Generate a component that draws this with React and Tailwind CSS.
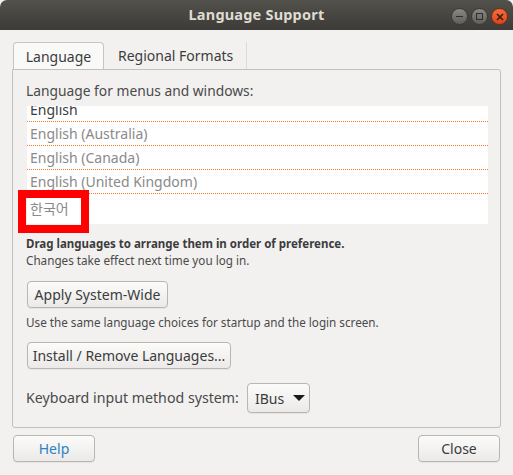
import React from "react";

const font = { fontFamily: '"Noto Sans", "Noto Sans CJK KR", sans-serif' };

function Btn({ children, className = "", textClass = "text-[#3c3c3c]" }) {
  return (
    <div
      className={`flex items-center justify-center rounded-[4px] border border-[#b9b6b0] bg-gradient-to-b from-[#fbfbfa] to-[#ebeae8] shadow-[0_1px_0_rgba(0,0,0,0.05)] ${textClass} ${className}`}
    >
      {children}
    </div>
  );
}

function Dots() {
  return (
    <svg className="block" width="461" height="1" viewBox="0 0 461 1">
      <line x1="0" y1="0.5" x2="461" y2="0.5" stroke="#f47421" strokeWidth="1" strokeDasharray="1 1" shapeRendering="crispEdges" />
    </svg>
  );
}

export default function App() {
  const rows = [
    { t: "English", c: "text-[#3c3c3c]" },
    { t: "English (Australia)", c: "text-[#8a8a8a]" },
    { t: "English (Canada)", c: "text-[#8a8a8a]" },
    { t: "English (United Kingdom)", c: "text-[#8a8a8a]" },
  ];
  return (
    <div className="relative w-[513px] h-[475px] bg-[#f2f1f0] overflow-hidden text-[#3c3c3c]" style={font}>
      {/* Title bar */}
      <div className="relative h-[30px] rounded-t-[7px] bg-gradient-to-b from-[#52514c] to-[#3c3b37] flex items-center justify-center">
        <span className="text-[14.5px] font-bold text-[#dfdbd2] tracking-[0.2px]">Language Support</span>
        <div className="absolute right-[5px] top-[8px] flex gap-[3px]">
          <div className="w-[17px] h-[17px] rounded-full bg-gradient-to-b from-[#8a8984] to-[#5f5e5a] border border-[#3a3935] flex items-center justify-center">
            <div className="w-[7px] h-[1.5px] bg-[#2f2e2b]" />
          </div>
          <div className="w-[17px] h-[17px] rounded-full bg-gradient-to-b from-[#8a8984] to-[#5f5e5a] border border-[#3a3935] flex items-center justify-center">
            <div className="w-[7px] h-[7px] border-[1.5px] border-[#2f2e2b]" />
          </div>
          <div className="w-[17px] h-[17px] rounded-full bg-gradient-to-b from-[#f26f3f] to-[#d9461b] border border-[#7a2a10] flex items-center justify-center">
            <svg width="8" height="8" viewBox="0 0 8 8">
              <path d="M1 1 L7 7 M7 1 L1 7" stroke="#3b1a0c" strokeWidth="1.6" />
            </svg>
          </div>
        </div>
      </div>

      {/* Body */}
      <div className="px-[12px] pt-[12px]">
        {/* Tabs */}
        <div className="flex items-end h-[27px]">
          <div className="w-[91px] h-[27px] ml-[1px] rounded-t-[4px] border border-b-0 border-[#c8c5c0] bg-[#f9f9f8] flex items-center justify-center text-[14px] text-[#3c3c3c]">
            Language
          </div>
          <div className="h-[27px] flex items-center pl-[14px] pr-[13px] text-[14px] text-[#3c3c3c] border-r border-[#dcdad6]">
            Regional Formats
          </div>
        </div>
        {/* Notebook */}
        <div className="w-[489px] h-[359px] border border-[#c3c0bb] rounded-b-[3px] rounded-tr-[3px] pl-[13px] pt-[11px]">
          <div className="text-[13.8px] leading-[20px] text-[#4a4a4a]">Language for menus and windows:</div>
          <div className="mt-[5px] ml-[1px] w-[461px] h-[118px] bg-white overflow-hidden">
            <div className="-mt-[8px]">
              {rows.map((r) => (
                <div key={r.t}>
                  <div className={`h-[23px] pl-[3px] flex items-center text-[14px] ${r.c}`}>{r.t}</div>
                  <Dots />
                </div>
              ))}
              <div className="h-[28px] pl-[3px] flex items-center text-[14px] text-[#8a8a8a]">한국어</div>
            </div>
          </div>
          <div className="mt-[12px] text-[11.5px] leading-[16px] font-bold text-[#3c3c3c]">
            Drag languages to arrange them in order of preference.
          </div>
          <div className="text-[11.7px] leading-[16px] text-[#4a4a4a]">Changes take effect next time you log in.</div>
          <Btn className="mt-[13px] ml-[1px] w-[141px] h-[27px] text-[14px]">Apply System-Wide</Btn>
          <div className="mt-[6px] text-[11.7px] leading-[16px] text-[#4a4a4a]">
            Use the same language choices for startup and the login screen.
          </div>
          <Btn className="mt-[12px] ml-[1px] w-[204px] h-[27px] text-[14px]">Install / Remove Languages...</Btn>
          <div className="mt-[14px] flex items-center">
            <span className="text-[14.2px] text-[#4a4a4a]">Keyboard input method system:</span>
            <Btn className="ml-[8px] w-[63px] h-[30px] text-[14px] !justify-start pl-[7px]">
              <span>IBus</span>
              <svg className="ml-[9px]" width="12" height="6" viewBox="0 0 12 6">
                <path d="M0 0 L12 0 L6 6 Z" fill="#1a1a1a" />
              </svg>
            </Btn>
          </div>
        </div>
        {/* Bottom buttons */}
        <div className="mt-[7px] flex justify-between px-[1px]">
          <Btn className="w-[82px] h-[27px] text-[14px]" textClass="text-[#2a82c2]">Help</Btn>
          <Btn className="w-[82px] h-[27px] text-[14px]">Close</Btn>
        </div>
      </div>

      {/* Red highlight annotation */}
      <div className="absolute left-[18px] top-[190px] w-[71px] h-[43px] border-[8px] border-[#ff0000]" />
    </div>
  );
}
